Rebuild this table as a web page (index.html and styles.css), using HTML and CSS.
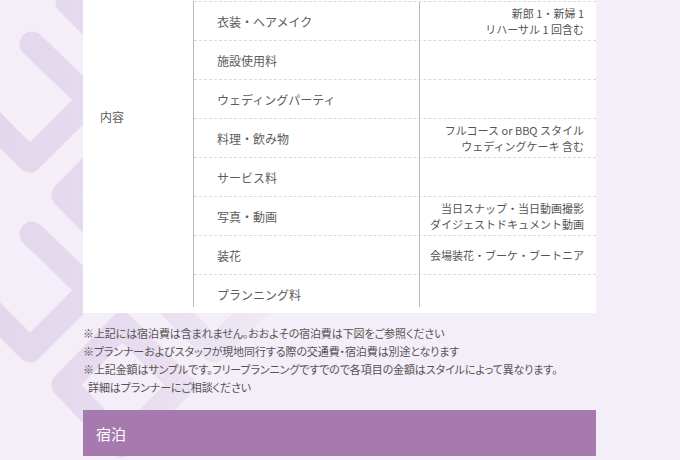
FILE: index.html
```html
<!DOCTYPE html>
<html lang="ja">
<head>
<meta charset="utf-8">
<title>プラン内容</title>
<link rel="stylesheet" href="styles.css">
</head>
<body>
<svg class="bg-pattern" width="340" height="460" viewBox="0 0 340 460" aria-hidden="true">
  <defs>
    <linearGradient id="fade" gradientUnits="userSpaceOnUse" x1="0" y1="0" x2="330" y2="0">
      <stop offset="0" stop-color="#e3d7ec"/>
      <stop offset="0.3" stop-color="#e5daee"/>
      <stop offset="0.6" stop-color="#ebe2f2"/>
      <stop offset="1" stop-color="#f3eef7"/>
    </linearGradient>
  </defs>
  <g fill="none" stroke="url(#fade)" stroke-width="25" stroke-linejoin="round" stroke-linecap="round">
    <path d="M32 44 L90 100 L30 160 L-30 100"/>
    <path d="M32 234 L90 290 L30 350 L-30 290"/>
    <path d="M125 -50 L185 0 L125 60 L68 2 Z"/>
    <path d="M122 135 L182 195 L122 255 L64 195 Z"/>
    <path d="M122 325 L182 385 L122 445 L64 385 Z"/>
    <path d="M214 44 L274 100 L214 160 L154 100"/>
    <path d="M214 234 L274 290 L214 350 L154 290"/>
  </g>
</svg>

<main class="page">
  <section class="plan-panel">
    <div class="plan-table">
      <div class="label-cell"><span class="label-text">内容</span></div>
      <div class="rows">
        <div class="row">
          <div class="item">衣装・ヘアメイク</div>
          <div class="value">新郎 1・新婦 1<br>リハーサル 1 回含む</div>
        </div>
        <div class="row">
          <div class="item">施設使用料</div>
          <div class="value"></div>
        </div>
        <div class="row">
          <div class="item">ウェディングパーティ</div>
          <div class="value"></div>
        </div>
        <div class="row">
          <div class="item">料理・飲み物</div>
          <div class="value">フルコース or BBQ スタイル<br>ウェディングケーキ 含む</div>
        </div>
        <div class="row">
          <div class="item">サービス料</div>
          <div class="value"></div>
        </div>
        <div class="row">
          <div class="item">写真・動画</div>
          <div class="value">当日スナップ・当日動画撮影<br>ダイジェストドキュメント動画</div>
        </div>
        <div class="row">
          <div class="item">装花</div>
          <div class="value">会場装花・ブーケ・ブートニア</div>
        </div>
        <div class="row row-last">
          <div class="item">プランニング料</div>
          <div class="value"></div>
        </div>
      </div>
    </div>
  </section>

  <div class="notes">
    <p class="note">※上記には宿泊費は含まれません。おおよその宿泊費は下図をご参照ください</p>
    <p class="note">※プランナーおよびスタッフが現地同行する際の交通費・宿泊費は別途となります</p>
    <p class="note">※上記金額はサンプルです。フリープランニングですでので各項目の金額はスタイルによって異なります。</p>
    <p class="note note-indent">詳細はプランナーにご相談ください</p>
  </div>

  <h2 class="section-bar">宿泊</h2>
</main>
</body>
</html>
```

FILE: styles.css
```css
html, body {
  margin: 0;
  padding: 0;
}

body {
  background: #f3eef7;
  font-family: "Noto Sans CJK JP", "Noto Sans", sans-serif;
  color: #5a5a5a;
  height: 460px;
  overflow: hidden;
  position: relative;
}

.bg-pattern {
  position: absolute;
  top: 0;
  left: 0;
  z-index: 0;
}

.page {
  position: relative;
  z-index: 1;
  width: 513px;
  margin-left: 83px;
}

.plan-panel {
  background: #ffffff;
  padding-top: 1px;
  padding-bottom: 6px;
}

.plan-table {
  display: flex;
}

.label-cell {
  width: 111px;
  box-sizing: border-box;
  border-right: 1px solid #b8b8b8;
  padding-left: 17px;
  padding-top: 107px;
  font-size: 12px;
  line-height: 18px;
  color: #5a5a5a;
}

.rows {
  flex: 1;
  display: flex;
  flex-direction: column;
}

.row {
  display: flex;
  height: 39px;
  box-sizing: border-box;
  border-top: 1px dashed #dadada;
}

.row-last {
  height: 33px;
  padding-top: 6px;
}

.item {
  width: 226px;
  box-sizing: border-box;
  border-right: 1px solid #b8b8b8;
  padding-left: 23px;
  display: flex;
  align-items: center;
  font-size: 12px;
  color: #5c5c5c;
}

.row-last .item {
  margin-top: -6px;
  padding-top: 6px;
}

.value {
  flex: 1;
  padding-right: 12px;
  display: flex;
  align-items: center;
  justify-content: flex-end;
  text-align: right;
  font-size: 11px;
  line-height: 16px;
  color: #555555;
}

.notes {
  margin-top: 11px;
}

.note {
  margin: 0;
  font-size: 11px;
  line-height: 18px;
  color: #555555;
  white-space: nowrap;
  font-feature-settings: "palt";
  letter-spacing: -0.1px;
}

.note-indent {
  padding-left: 5px;
}

.section-bar {
  margin: 14px 0 0;
  height: 46px;
  display: flex;
  align-items: center;
  padding-left: 13px;
  background: #a67aae;
  color: #ffffff;
  font-size: 15px;
  font-weight: 400;
}
```
